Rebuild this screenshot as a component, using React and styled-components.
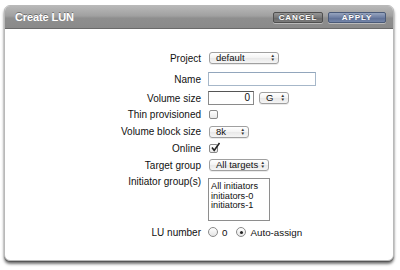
import React from "react";
import styled, { createGlobalStyle } from "styled-components";

const Global = createGlobalStyle`
  html, body { margin: 0; padding: 0; background: #fff; }
  body { font-family: "Liberation Sans", Arial, sans-serif; }
  #root { width: 400px; height: 270px; }
`;

const Page = styled.div`
  width: 400px;
  height: 270px;
  padding: 5px 6px 0 4px;
  box-sizing: border-box;
  background: #fff;
`;

const Dialog = styled.div`
  height: 254px;
  border-radius: 6px;
  border: 1px solid #b9b9b9;
  background: #fff;
  box-shadow: 0 3px 3px rgba(0, 0, 0, 0.55), 0 1px 1px rgba(0, 0, 0, 0.3);
  overflow: hidden;
  display: flex;
  flex-direction: column;
`;

const Header = styled.div`
  height: 22px;
  flex: none;
  display: flex;
  align-items: center;
  padding: 0 7px 0 10px;
  background: linear-gradient(#b8b8b8 0%, #a0a0a0 45%, #8e8e8e 55%, #8a8a8a 100%);
  border-bottom: 1px solid #6a6a6a;
`;

const Title = styled.div`
  color: #fff;
  font-weight: bold;
  font-size: 11px;
  text-shadow: 0 -1px 0 rgba(0, 0, 0, 0.35);
  flex: 1;
  letter-spacing: -0.1px;
`;

const HeadButton = styled.button`
  height: 11px;
  width: ${(p) => p.w}px;
  margin-left: 5px;
  padding: 0;
  border: 1px solid ${(p) => (p.primary ? "#4a5a78" : "#4f4f4f")};
  border-radius: 2px;
  background: ${(p) =>
    p.primary
      ? "linear-gradient(#97a5bf, #6d7ea2 50%, #5c6d93 51%, #7485a8)"
      : "linear-gradient(#979797, #777 50%, #666 51%, #7b7b7b)"};
  color: #fff;
  font-family: "Liberation Sans", Arial, sans-serif;
  font-weight: bold;
  font-size: 8px;
  letter-spacing: 0.9px;
  line-height: 9px;
  box-shadow: 0 1px 0 rgba(255, 255, 255, 0.4);
  text-shadow: 0 -1px 0 rgba(0, 0, 0, 0.4);
`;

const Form = styled.div`
  display: grid;
  grid-template-columns: 196px 1fr;
  column-gap: 7px;
  padding-top: 19px;
  font-size: 10px;
  color: #111;
`;

const Label = styled.div`
  text-align: right;
  height: ${(p) => p.h}px;
  display: flex;
  align-items: ${(p) => (p.top ? "flex-start" : "center")};
  justify-content: flex-end;
  padding-top: ${(p) => (p.top ? 2 : 0)}px;
  box-sizing: border-box;
`;

const Cell = styled.div`
  height: ${(p) => p.h}px;
  display: flex;
  align-items: ${(p) => (p.top ? "flex-start" : "center")};
  padding-top: ${(p) => (p.top ? 4 : 0)}px;
  box-sizing: border-box;
  gap: ${(p) => p.gap || 0}px;
`;

const Select = styled.div`
  width: ${(p) => p.w}px;
  height: 12px;
  box-sizing: border-box;
  border: 1px solid #a0a0a0;
  border-radius: 3px;
  background: linear-gradient(#ffffff, #f3f3f3 50%, #e8e8e8 51%, #f5f5f5);
  box-shadow: 0 1px 0 rgba(0, 0, 0, 0.08);
  display: flex;
  align-items: center;
  justify-content: space-between;
  padding: 0 3px 0 6px;
  font-size: 9.5px;
  line-height: 10px;
  color: #111;
  margin-left: 1px;
  white-space: nowrap;
`;

const Arrows = styled.span`
  font-size: 4.5px;
  line-height: 4px;
  display: flex;
  flex-direction: column;
  color: #333;
  margin-left: 2px;
`;

const TextInput = styled.div`
  width: ${(p) => p.w}px;
  height: 14px;
  box-sizing: border-box;
  border: 1px solid ${(p) => (p.dark ? "#8a8a8a" : "#a6b7c9")};
  border-top-color: ${(p) => (p.dark ? "#555" : "#92a6bc")};
  background: #fff;
  font-size: 10px;
  text-align: right;
  padding: 0 3px;
  line-height: 12px;
`;

const Check = styled.span`
  width: 9px;
  height: 9px;
  box-sizing: border-box;
  border: 1px solid #8a8a8a;
  border-radius: 2px;
  background: linear-gradient(#fff, #e9e9e9);
  margin-left: 1px;
  position: relative;
  display: inline-block;
`;

const ListBox = styled.div`
  width: 62px;
  height: 43px;
  box-sizing: border-box;
  border: 1px solid #8e8e8e;
  background: #fff;
  padding: 3px 2px;
  font-size: 9.2px;
  line-height: 9.7px;
  color: #111;
  white-space: nowrap;
`;

const Radio = styled.span`
  width: 10px;
  height: 10px;
  box-sizing: border-box;
  border-radius: 50%;
  border: 1px solid #8a8a8a;
  background: linear-gradient(#fff, #e4e4e4);
  display: inline-flex;
  align-items: center;
  justify-content: center;
  margin-right: 4px;
  &::after {
    content: "";
    width: 3px;
    height: 3px;
    border-radius: 50%;
    background: ${(p) => (p.on ? "#222" : "transparent")};
  }
`;

const RadioItem = styled.span`
  display: inline-flex;
  align-items: center;
  margin-right: ${(p) => p.mr || 0}px;
  font-size: 9.8px;
`;

const Updown = () => (
  <Arrows>
    <span>▲</span>
    <span>▼</span>
  </Arrows>
);

const Tick = () => (
  <svg width="11" height="11" viewBox="0 0 11 11" style={{ position: "absolute", left: 0, top: -3 }}>
    <path d="M2 5.5 L4.2 8.5 L9.5 1" stroke="#222" strokeWidth="1.6" fill="none" />
  </svg>
);

export default function App() {
  return (
    <>
      <Global />
      <Page>
        <Dialog>
          <Header>
            <Title>Create LUN</Title>
            <HeadButton w={50}>CANCEL</HeadButton>
            <HeadButton w={58} primary>
              APPLY
            </HeadButton>
          </Header>
          <Form>
            <Label h={20}>Project</Label>
            <Cell h={20}>
              <Select w={70}>
                <span>default</span>
                <Updown />
              </Select>
            </Cell>

            <Label h={22}>Name</Label>
            <Cell h={22}>
              <TextInput w={108} />
            </Cell>

            <Label h={16}>Volume size</Label>
            <Cell h={16} gap={4}>
              <TextInput w={46} dark>
                0
              </TextInput>
              <Select w={30}>
                <span>G</span>
                <Updown />
              </Select>
            </Cell>

            <Label h={17}>Thin provisioned</Label>
            <Cell h={17}>
              <Check />
            </Cell>

            <Label h={17}>Volume block size</Label>
            <Cell h={17}>
              <Select w={40}>
                <span>8k</span>
                <Updown />
              </Select>
            </Cell>

            <Label h={16}>Online</Label>
            <Cell h={16}>
              <Check>
                <Tick />
              </Check>
            </Cell>

            <Label h={18}>Target group</Label>
            <Cell h={18}>
              <Select w={60}>
                <span>All targets</span>
                <Updown />
              </Select>
            </Cell>

            <Label h={48} top>
              Initiator group(s)
            </Label>
            <Cell h={48} top>
              <ListBox>
                <div>All initiators</div>
                <div>initiators-0</div>
                <div>initiators-1</div>
              </ListBox>
            </Cell>

            <Label h={20}>LU number</Label>
            <Cell h={20}>
              <RadioItem mr={9}>
                <Radio />0
              </RadioItem>
              <RadioItem>
                <Radio on />
                Auto-assign
              </RadioItem>
            </Cell>
          </Form>
        </Dialog>
      </Page>
    </>
  );
}
